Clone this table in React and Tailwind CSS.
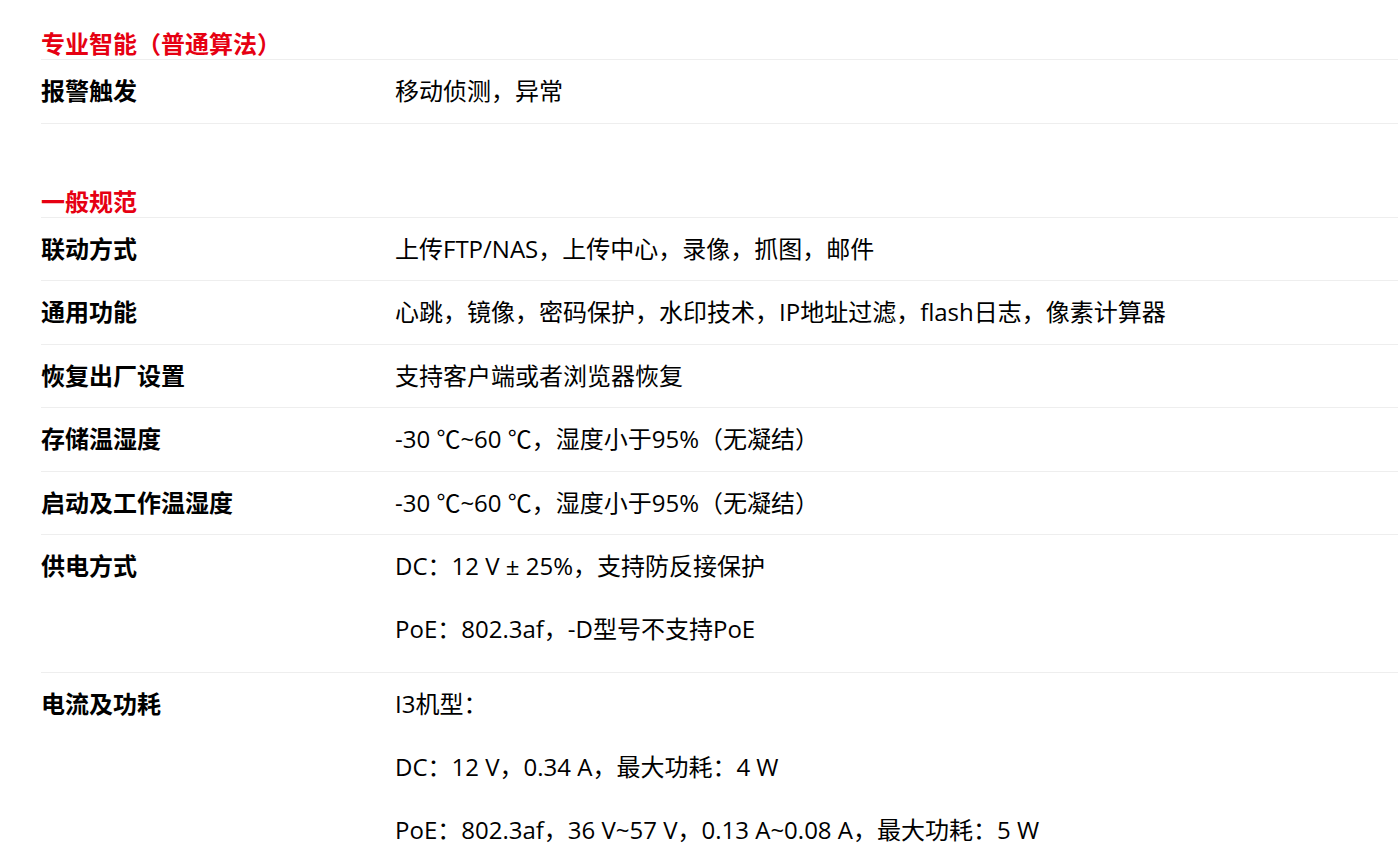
const sections = [
  {
    title: '专业智能（普通算法）',
    rows: [{ label: '报警触发', values: ['移动侦测，异常'] }],
  },
  {
    title: '一般规范',
    rows: [
      { label: '联动方式', values: ['上传FTP/NAS，上传中心，录像，抓图，邮件'] },
      { label: '通用功能', values: ['心跳，镜像，密码保护，水印技术，IP地址过滤，flash日志，像素计算器'] },
      { label: '恢复出厂设置', values: ['支持客户端或者浏览器恢复'] },
      { label: '存储温湿度', values: ['-30 ℃~60 ℃，湿度小于95%（无凝结）'] },
      { label: '启动及工作温湿度', values: ['-30 ℃~60 ℃，湿度小于95%（无凝结）'] },
      { label: '供电方式', values: ['DC：12 V ± 25%，支持防反接保护', 'PoE：802.3af，-D型号不支持PoE'] },
      {
        label: '电流及功耗',
        values: ['I3机型：', 'DC：12 V，0.34 A，最大功耗：4 W', 'PoE：802.3af，36 V~57 V，0.13 A~0.08 A，最大功耗：5 W'],
      },
    ],
  },
];

const SpecRow = ({ row }) => {
  const multi = row.values.length > 1;
  return (
    <div className={`flex border-b border-[#eeeeee] pt-[17px] ${multi ? 'pb-[29px]' : 'pb-[17.5px]'}`}>
      <div className="w-[354px] shrink-0 text-[24px] leading-[28px] font-bold text-black">
        {row.label}
      </div>
      <div className="flex flex-col gap-[35px] text-[24px] leading-[28px] text-black">
        {row.values.map((v, i) => (
          <p key={i}>{v}</p>
        ))}
      </div>
    </div>
  );
};

export default function App() {
  return (
    <div
      className="min-h-screen bg-white pl-[41px] pt-[29px]"
      style={{ fontFamily: '"Open Sans", "Noto Sans CJK SC", sans-serif' }}
    >
      {sections.map((section, idx) => (
        <section key={section.title} className={idx > 0 ? 'mt-[63px]' : ''}>
          <h3 className="border-b border-[#eeeeee] text-[24px] leading-[30px] font-bold text-[#e60012]">
            {section.title}
          </h3>
          {section.rows.map((row) => (
            <SpecRow key={row.label} row={row} />
          ))}
        </section>
      ))}
    </div>
  );
}
